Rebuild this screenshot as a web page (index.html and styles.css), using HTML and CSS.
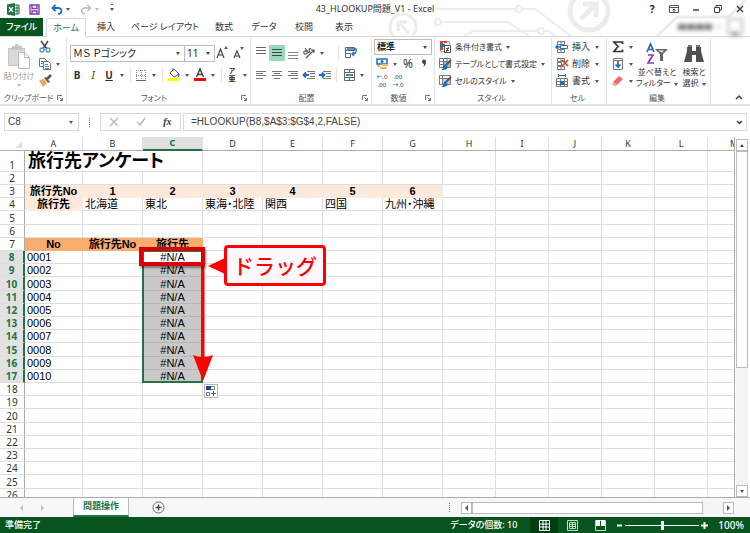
FILE: index.html
```html
<!DOCTYPE html>
<html lang="ja">
<head>
<meta charset="utf-8">
<title>43_HLOOKUP問題_V1 - Excel</title>
<link rel="stylesheet" href="styles.css">
</head>
<body>
<header class="top">
  <svg class="circuit" viewBox="0 0 370 36" width="370" height="36" aria-hidden="true">
    <g fill="none" stroke="#ececec" stroke-width="2">
      <circle cx="209" cy="11" r="19" stroke-width="5"/>
      <path d="M201 19 215 5M203 4h13v13" stroke-width="5"/>
      <circle cx="23" cy="27" r="13" stroke-width="3"/>
      <path d="M29 33 19 23M18 31v-9h9" stroke-width="3"/>
      <circle cx="58" cy="22" r="3"/><path d="M61 22h67l21 14"/>
      <circle cx="139" cy="9" r="3"/><path d="M56 9h80M142 9h13l36 27"/>
      <circle cx="161" cy="31" r="3"/><path d="M84 36l9-5h65M164 31h4l8 5"/>
      <path d="M277 36l20-19h52M349 17 365 0" stroke-width="3"/>
    </g>
  </svg>
  <div class="titlebar">
    <div class="quick">
      <svg width="13" height="13" viewBox="0 0 13 13"><path fill="#1e7145" d="M0 1.500 8 0v13L0 11.500z"/><path fill="none" stroke="#1e7145" d="M8 2h4v9H8M8 5h4M8 8h4M10 2v9"/><path d="M2 4l4 5M6 4 2 9" stroke="#fff" stroke-width="1.300"/></svg>
      <button aria-label="上書き保存"><svg width="11" height="11" viewBox="0 0 11 11"><path fill="none" stroke="#7b3fb0" stroke-width="1.400" d="M1 1h9v9H1zM3 1v3.500h5V1M3 10V7h5v3"/></svg></button>
      <button class="undo" aria-label="元に戻す"><svg width="12" height="11" viewBox="0 0 12 11"><path fill="none" stroke="#1f6fbf" stroke-width="1.800" d="M2 4h5c5 0 4 6 0 6M4.500 1 1.500 4l3 3"/></svg></button>
      <button class="dd" aria-label="元に戻すの一覧"></button>
      <button class="redo" aria-label="やり直し"><svg width="12" height="11" viewBox="0 0 12 11"><path fill="none" stroke="#b9b9b9" stroke-width="1.300" d="M10 4H5C0 4 1 10 5 10M7.500 1l3 3-3 3"/></svg></button>
      <button class="dd pale" aria-label="やり直しの一覧"></button>
      <button class="dd bar" aria-label="クイック アクセス"></button>
    </div>
    <h1>43_HLOOKUP問題_V1 - Excel</h1>
    <div class="window">
      <button aria-label="ヘルプ"><b>?</b></button>
      <button aria-label="リボンの表示オプション"><svg width="10" height="8" viewBox="0 0 10 8"><path fill="none" stroke="#555" d="M.5.5h9v7h-9zM.5 2.500h9M5 7V4M3.500 5.500 5 4l1.500 1.500"/></svg></button>
      <button aria-label="最小化"><svg width="8" height="8" viewBox="0 0 8 8"><path stroke="#444" stroke-width="1.500" d="M1 5h6"/></svg></button>
      <button aria-label="元に戻す (縮小)"><svg width="8" height="8" viewBox="0 0 8 8"><path fill="none" stroke="#444" d="M.5 2.500h5v5h-5zM2 2V.5h5.500V5H6"/></svg></button>
      <button aria-label="閉じる"><svg width="8" height="8" viewBox="0 0 8 8"><path stroke="#444" stroke-width="1.500" d="M1 1l6 6M7 1 1 7"/></svg></button>
    </div>
  </div>
  <nav class="tabs">
    <button class="file">ファイル</button>
    <button class="on">ホーム</button>
    <button>挿入</button>
    <button class="wide">ページ レイアウト</button>
    <button>数式</button>
    <button>データ</button>
    <button>校閲</button>
    <button>表示</button>
    <svg class="account" width="70" height="18" viewBox="0 0 70 18" aria-hidden="true"><path d="M3 9h34" stroke="#777" stroke-width="6" stroke-dasharray="8 1"/><path d="M42 9h3" stroke="#aaa" stroke-width="2"/><path fill="#fff" stroke="#bbb" stroke-width="2" d="M53 17V1h14v16"/><path fill="#999" d="M55 18c0-6 10-6 10 0z"/></svg>
  </nav>
</header>

<section class="ribbon">
  <div class="group clip">
    <div class="body cols">
      <button class="big off">
        <svg width="24" height="26" viewBox="0 0 24 26"><path fill="#dcd9d9" stroke="#c6c4c4" d="M1.500 5.500h16v17h-16z"/><path fill="#c6c4c4" d="M5 7V3h3c0-3 4-3 4 0h3v4z"/><path fill="#fff" stroke="#bbb9b9" d="M11.500 9.500h6l5 5v11h-11zM17.500 9.500v5h5"/></svg>
        <span>貼り付け</span><i class="tri"></i>
      </button>
      <div class="stack">
        <button class="ib" aria-label="切り取り"><svg class="i" viewBox="0 0 16 16"><path stroke="#444" stroke-width="1.500" d="M4 2l6 8M11 2 6 10"/><g fill="none" stroke="#4b8fcb" stroke-width="1.300"><circle cx="5" cy="11" r="2"/><circle cx="11" cy="11" r="2"/></g></svg></button>
        <div class="row"><button class="ib" aria-label="コピー"><svg class="i" viewBox="0 0 16 16"><g fill="#fff" stroke="#777"><path d="M2.500 2.500h5l2 2v6h-7z"/><path d="M6.500 5.500h5l2 2v6h-7z"/></g><path stroke="#3b87cc" d="M8 8.500h3M8 10.500h4M8 12.500h4M4 5.500h2M4 7.500h2"/></svg></button><button class="dd" aria-label="コピーの種類"></button></div>
        <button class="ib" aria-label="書式のコピー"><svg class="i" viewBox="0 0 16 16"><path fill="#e9a764" d="M2 7l5-1 3 4-4 4z"/><path fill="#666" d="M7 5l2-1 4 5-2 1z"/><path stroke="#555" stroke-width="2.500" d="M10 6l4-4"/></svg></button>
      </div>
    </div>
    <div class="label"><span>クリップボード</span><button class="launch" aria-label="クリップボードの詳細"><svg width="6" height="6" viewBox="0 0 6 6"><path fill="none" stroke="#777" d="M.5 5V.5H5M2.500 2.500l3 3M5.500 3v2.500H3"/></svg></button></div>
  </div>

  <div class="group font">
    <div class="body two">
      <div class="row">
        <label class="combo fam"><select aria-label="フォント"><option>ＭＳ Ｐゴシック</option></select></label><label class="combo size"><select aria-label="フォント サイズ"><option>11</option></select></label>
        <button class="ib grow" aria-label="フォント サイズの拡大"><svg class="i" viewBox="0 0 16 16"><path fill="none" stroke="#444" stroke-width="1.200" d="M2 13 5.500 4 9 13M3.500 10h4"/><path fill="#1f6fbf" d="M9 4l2-3 2 3z"/></svg></button>
        <button class="ib" aria-label="フォント サイズの縮小"><svg class="i" viewBox="0 0 16 16"><path fill="none" stroke="#444" stroke-width="1.200" d="M2 13 5 6l3 7M3 11h4"/><path fill="#1f6fbf" d="M8 2h4l-2 3z"/></svg></button>
      </div>
      <div class="row">
        <button class="ib"><b>B</b></button><button class="ib"><em>I</em></button><button class="ib"><u><b>U</b></u></button><button class="dd" aria-label="下線"></button><i class="sep"></i>
        <button class="ib" aria-label="罫線"><svg class="i" viewBox="0 0 16 16"><path fill="none" stroke="#888" stroke-dasharray="1 1" d="M3 3.500h10M3.500 3v10M12.500 3v10M3 8.500h10M8.500 3v10"/><path stroke="#666" d="M3 13.500h10"/></svg></button><button class="dd" aria-label="罫線の種類"></button><i class="sep"></i>
        <button class="ib" aria-label="塗りつぶし"><svg class="i" viewBox="0 0 16 16"><path fill="#fff" stroke="#666" d="M4 6l4-4 5 5-5 3z"/><path fill="none" stroke="#666" d="M7 4V1"/><path fill="#1f6fbf" d="M12 6c2 1 2 3 1 4-2-1-1-2-1-4z"/><path fill="#ff0" d="M2 11h12v3H2z"/></svg></button><button class="dd" aria-label="塗りつぶしの色"></button>
        <button class="ib" aria-label="フォントの色"><svg class="i" viewBox="0 0 16 16"><path fill="none" stroke="#444" stroke-width="1.500" d="M4.500 10 8 2l3.500 8M6 7.500h4"/><path fill="#e00" d="M2 11h12v3H2z"/></svg></button><button class="dd" aria-label="文字の色"></button><i class="sep"></i>
        <button class="ib ruby"><span>ア</span><span>亜</span></button><button class="dd" aria-label="ふりがな"></button>
      </div>
    </div>
    <div class="label"><span>フォント</span><button class="launch" aria-label="フォントの詳細"><svg width="6" height="6" viewBox="0 0 6 6"><path fill="none" stroke="#777" d="M.5 5V.5H5M2.500 2.500l3 3M5.500 3v2.500H3"/></svg></button></div>
  </div>

  <div class="group align">
    <div class="body two">
      <div class="row">
        <button class="ib" aria-label="上揃え"><svg class="i" viewBox="0 0 16 16"><path stroke="#666" d="M3 2.500h10M3 5.500h10M3 8.500h10"/></svg></button>
        <button class="ib sel" aria-label="上下中央揃え"><svg class="i" viewBox="0 0 16 16"><path stroke="#444" d="M3 4.500h10M3 7.500h10M3 10.500h10"/></svg></button>
        <button class="ib" aria-label="下揃え"><svg class="i" viewBox="0 0 16 16"><path stroke="#888" d="M3 7.500h10M3 10.500h10M3 13.500h10"/></svg></button>
        <button class="ib" aria-label="方向"><svg class="i" viewBox="0 0 16 16"><g fill="none" stroke="#555" stroke-width="1.200"><circle cx="4.500" cy="7.500" r="1.700"/><path d="M4 3l4 5M9 7.500c-2-3 0-5 1-3"/><path d="M5 13l8-8M13 8V5h-3"/></g></svg></button><button class="dd" aria-label="方向の一覧"></button><i class="sep far"></i>
        <button class="ib" aria-label="折り返して全体を表示する"><svg class="i" viewBox="0 0 16 16"><path fill="none" stroke="#666" d="M2.500 2.500h9v3h-9zM2.500 8.500h5v4h-5zM2.500 5v4"/><path fill="none" stroke="#1f6fbf" stroke-width="1.300" d="M4 4h9c1 4-1 5-4 5M11 7 9 9l2 2"/></svg></button>
      </div>
      <div class="row">
        <button class="ib" aria-label="左揃え"><svg class="i" viewBox="0 0 16 16"><path stroke="#777" d="M3 4.500h10M3 6.500h7M3 8.500h10M3 11.500h7"/></svg></button>
        <button class="ib" aria-label="中央揃え"><svg class="i" viewBox="0 0 16 16"><path stroke="#777" d="M3 4.500h10M5 6.500h6M3 8.500h10M5 11.500h6"/></svg></button>
        <button class="ib" aria-label="右揃え"><svg class="i" viewBox="0 0 16 16"><path stroke="#777" d="M3 4.500h10M6 6.500h7M3 8.500h10M6 11.500h7"/></svg></button>
        <button class="ib" aria-label="インデントを減らす"><svg class="i" viewBox="0 0 16 16"><path stroke="#777" d="M6 4.500h8M9 6.500h5M9 9.500h5M6 11.500h8"/><path fill="none" stroke="#1f6fbf" stroke-width="1.800" d="M8 8H3M5 5.500 2.500 8 5 10.500"/></svg></button>
        <button class="ib" aria-label="インデントを増やす"><svg class="i" viewBox="0 0 16 16"><path stroke="#777" d="M6 4.500h8M9 6.500h5M9 9.500h5M6 11.500h8"/><path fill="none" stroke="#1f6fbf" stroke-width="1.800" d="M2 8h5M5 5.500 7.500 8 5 10.500"/></svg></button>
        <i class="sep near"></i>
        <button class="ib" aria-label="セルを結合して中央揃え"><svg class="i" viewBox="0 0 16 16"><path fill="none" stroke="#666" d="M3.500 2.500h10v11h-10zM3 5.500h10M3 10.500h10M8.500 3v2M8.500 11v2"/><path stroke="#1f6fbf" stroke-width="1.300" d="M5 8h7M6 7v2M11 7v2"/></svg></button><button class="dd" aria-label="結合の種類"></button>
      </div>
    </div>
    <div class="label"><span>配置</span><button class="launch" aria-label="配置の詳細"><svg width="6" height="6" viewBox="0 0 6 6"><path fill="none" stroke="#777" d="M.5 5V.5H5M2.500 2.500l3 3M5.500 3v2.500H3"/></svg></button></div>
  </div>

  <div class="group number">
    <div class="body three">
      <label class="combo"><select aria-label="表示形式"><option>標準</option></select></label>
      <div class="row"><button class="ib" aria-label="通貨表示形式"><svg class="i" viewBox="0 0 16 16"><path fill="#fff" stroke="#1f6fbf" stroke-width="1.500" d="M3 3h10v5H3z"/><circle cx="8" cy="5.500" r="1.500" fill="#1f6fbf"/><path fill="#f0b566" d="M8 8h6v2H8zM6 11h7v2H6zM3 9h3v2H3z"/></svg></button><button class="dd" aria-label="通貨の種類"></button><button class="ib pct">%</button><button class="ib comma" aria-label="桁区切りスタイル"><svg class="i" viewBox="0 0 16 16"><path fill="#444" d="M6 5a2 2 0 1 1 4 1c0 2-1 4-3 5 1-1 1-2 1-3-1 0-2-1-2-3z"/></svg></button></div>
      <div class="row"><button class="ib dec"><span><b>←</b>.0</span><span>.00</span></button><button class="ib dec"><span>.00</span><span><b>→</b>.0</span></button></div>
    </div>
    <div class="label"><span>数値</span><button class="launch" aria-label="数値の詳細"><svg width="6" height="6" viewBox="0 0 6 6"><path fill="none" stroke="#777" d="M.5 5V.5H5M2.500 2.500l3 3M5.500 3v2.500H3"/></svg></button></div>
  </div>

  <div class="group style">
    <div class="body three">
      <button class="cmd"><svg class="i" viewBox="0 0 16 16"><path fill="#fff" stroke="#999" d="M3.500 2.500h9v10h-9z"/><path fill="#e23c28" d="M3 2h3v3H3zM3 8h3v3H3zM7 2h3v2H7z"/><path fill="#1f6fbf" d="M3 5h5v3H3z"/><path fill="#fff" stroke="#555" d="M7.500 6.500h6v7h-6zM9 9.500h3M9 11.500h3M11.500 8 9.500 13"/></svg><span>条件付き書式</span><i class="tri"></i></button>
      <button class="cmd"><svg class="i" viewBox="0 0 16 16"><path fill="#fff" stroke="#777" d="M2.500 2.500h11v9h-11zM2 5.500h11M2 8.500h11M6.500 3v8M10 3v8"/><path fill="#8bb9e3" d="M7 6h6v5H7z"/><path stroke="#555" stroke-width="2" d="M14 4 9 9"/><path fill="#1f6fbf" d="M8 8l3 3c-1 3-4 3-7 3 3-1 2-5 4-6z"/></svg><span>テーブルとして書式設定</span><i class="tri"></i></button>
      <button class="cmd"><svg class="i" viewBox="0 0 16 16"><path fill="#fff" stroke="#777" d="M2.500 2.500h11v9h-11zM2 5.500h11M5.500 3v8"/><path fill="#b8d3ec" d="M6 6h7v5H6z"/><path stroke="#555" stroke-width="2" d="M14 4 9 9"/><path fill="#1f6fbf" d="M8 8l3 3c-1 3-4 3-7 3 3-1 2-5 4-6z"/></svg><span>セルのスタイル</span><i class="tri"></i></button>
    </div>
    <div class="label"><span>スタイル</span></div>
  </div>

  <div class="group cell">
    <div class="body three">
      <button class="cmd"><svg class="i" viewBox="0 0 16 16"><path fill="#fff" stroke="#777" d="M3.500 2.500h7v3h-7zM3.500 10.500h7v3h-7zM7 3v2M7 11v2"/><path fill="#fff" stroke="#1f6fbf" d="M6.500 6.500h7v3h-7z"/><path fill="none" stroke="#1f6fbf" stroke-width="1.500" d="M7 8H2M4 6 2 8l2 2"/></svg><span>挿入</span><i class="tri"></i></button>
      <button class="cmd"><svg class="i" viewBox="0 0 16 16"><path fill="#fff" stroke="#777" d="M3.500 2.500h7v3h-7zM3.500 10.500h7v3h-7zM7 3v2M7 11v2M3.500 6.500h4v3h-4z"/><path stroke="#e03a1c" stroke-width="1.700" d="M8 4l6 6M14 4l-6 6"/></svg><span>削除</span><i class="tri"></i></button>
      <button class="cmd"><svg class="i" viewBox="0 0 16 16"><path fill="#fff" stroke="#777" d="M2.500 5.500h11v8h-11zM2 8.500h11M2 11.500h11M6.500 5v8M10.500 5v8"/><path fill="#1f6fbf" d="M6 8h4v4H6z"/><path stroke="#1f6fbf" d="M4 2.500h8M4.500 1v3M11.500 1v3"/></svg><span>書式</span><i class="tri"></i></button>
    </div>
    <div class="label"><span>セル</span></div>
  </div>

  <div class="group edit">
    <div class="body cols">
      <div class="stack">
        <div class="row"><button class="ib" aria-label="合計"><svg class="i" viewBox="0 0 16 16"><path fill="none" stroke="#333" stroke-width="1.700" d="M12.500 5V3H4l4 4.500L4 12.500h8.500v-2"/></svg></button><button class="dd" aria-label="合計の種類"></button></div>
        <div class="row"><button class="ib" aria-label="フィル"><svg class="i" viewBox="0 0 16 16"><path fill="#fff" stroke="#777" d="M3.500 2.500h9v11h-9zM3 4.500h9"/><path fill="none" stroke="#1f6fbf" stroke-width="1.700" d="M8 5v6M5.500 8.500 8 11l2.500-2.500"/></svg></button><button class="dd" aria-label="フィルの種類"></button></div>
        <div class="row"><button class="ib" aria-label="クリア"><svg class="i" viewBox="0 0 16 16"><path fill="#ee6a70" d="M3 9 9 3l4 3-6 6z"/><path fill="#f5a5a8" d="M3 9l4 3-1 1H4l-2-2z"/></svg></button><button class="dd" aria-label="クリアの種類"></button></div>
      </div>
      <button class="big sort"><svg width="24" height="24" viewBox="0 0 24 24"><path fill="none" stroke="#2467ae" stroke-width="1.700" d="M2 10 5.500 2 9 10M3.500 7.500h4"/><path fill="none" stroke="#8a3fb8" stroke-width="1.700" d="M3 13h5l-5 8h6"/><path fill="#666" d="M10 7h13l-5 5v7h-3v-7z"/><path fill="#fff" d="M13 8.500h6l-2 2z"/></svg><span>並べ替えと<br>フィルター<i class="tri"></i></span></button>
      <button class="big"><svg width="24" height="24" viewBox="0 0 24 24"><path fill="#505050" d="M5 5h5v4h4V5h5v4l3 11h-8v-7h-4v7H2L5 9z"/><path fill="#777" d="M6 3h4v2H6zM14 3h4v2h-4z"/></svg><span>検索と<br>選択<i class="tri"></i></span></button>
    </div>
    <div class="label"><span>編集</span></div>
  </div>
  <button class="collapse" aria-label="リボンを折りたたむ"><svg width="8" height="6" viewBox="0 0 8 6"><path fill="none" stroke="#444" stroke-width="1.500" d="M1 5l3-3 3 3"/></svg></button>
</section>

<section class="formula">
  <div class="box name"><input aria-label="名前ボックス" value="C8"><i class="tri"></i></div>
  <span class="dots"></span>
  <div class="box fx">
    <button aria-label="キャンセル"><svg width="10" height="10" viewBox="0 0 10 10"><path stroke="#bbb" stroke-width="1.300" d="M1 1l8 8M9 1 1 9"/></svg></button>
    <button aria-label="入力"><svg width="10" height="10" viewBox="0 0 10 10"><path fill="none" stroke="#bbb" stroke-width="1.600" d="M1 5l3 3 5-7"/></svg></button>
    <button class="fn">fx</button>
  </div>
  <div class="box line"><input aria-label="数式バー" value="=HLOOKUP(B8,$A$3:$G$4,2,FALSE)"><svg width="7" height="5" viewBox="0 0 7 5"><path fill="none" stroke="#444" stroke-width="1.500" d="M1 1l2.500 2.500L6 1"/></svg></div>
</section>

<main class="sheet">
  <div class="view">
    <table>
      <colgroup><col class="c0"><col class="ca"><col class="cw"><col class="cw"><col class="cw"><col class="cw"><col class="cw"><col class="cw"><col class="cn"><col class="cn"><col class="cn"><col class="cn"><col class="cn"><col class="cn"></colgroup>
      <thead><tr><th class="corner"></th><th>A</th><th>B</th><th class="act">C</th><th>D</th><th>E</th><th>F</th><th>G</th><th>H</th><th>I</th><th>J</th><th>K</th><th>L</th><th>M</th></tr></thead>
      <tbody>
        <tr class="tall"><th>1</th><td class="title" colspan="3">旅行先アンケート</td><td></td><td></td><td></td><td></td><td></td><td></td><td></td><td></td><td></td><td></td></tr>
        <tr><th>2</th><td></td><td></td><td></td><td></td><td></td><td></td><td></td><td></td><td></td><td></td><td></td><td></td><td></td></tr>
        <tr class="peach"><th>3</th><td>旅行先No</td><td>1</td><td>2</td><td>3</td><td>4</td><td>5</td><td>6</td><td></td><td></td><td></td><td></td><td></td><td></td></tr>
        <tr><th>4</th><td class="key">旅行先</td><td>北海道</td><td>東北</td><td>東海・北陸</td><td>関西</td><td>四国</td><td>九州・沖縄</td><td></td><td></td><td></td><td></td><td></td><td></td></tr>
        <tr><th>5</th><td></td><td></td><td></td><td></td><td></td><td></td><td></td><td></td><td></td><td></td><td></td><td></td><td></td></tr>
        <tr><th>6</th><td></td><td></td><td></td><td></td><td></td><td></td><td></td><td></td><td></td><td></td><td></td><td></td><td></td></tr>
        <tr class="orange"><th>7</th><td>No</td><td>旅行先No</td><td>旅行先</td><td></td><td></td><td></td><td></td><td></td><td></td><td></td><td></td><td></td><td></td></tr>
        <tr class="pick first"><th>8</th><td>0001</td><td></td><td class="na">#N/A
          <div class="range"></div>
          <svg class="drag" width="20" height="118" viewBox="0 0 20 118"><path stroke="red" stroke-width="3" d="M10 0v100"/><path fill="red" d="M0 91q10 4 20 0L10 117z"/></svg>
          <div class="focus"></div>
          <div class="callout">ドラッグ</div>
          <svg class="fill" width="14" height="14" viewBox="0 0 14 14"><path fill="#fff" stroke="#b5b5b5" d="M.5.5h13v13H.5z"/><path fill="#fff" stroke="#777" d="M2.500 2.500h8v3h-8zM2.500 8.500h3v3h-3z"/><path fill="#1c3f94" d="M2 2h5v4H2z"/><path stroke="#555" d="M7 9.500h5M9.500 7v5"/></svg>
        </td><td></td><td></td><td></td><td></td><td></td><td></td><td></td><td></td><td></td><td></td></tr>
        <tr class="pick"><th>9</th><td>0002</td><td></td><td class="na">#N/A</td><td></td><td></td><td></td><td></td><td></td><td></td><td></td><td></td><td></td><td></td></tr>
        <tr class="pick"><th>10</th><td>0003</td><td></td><td class="na">#N/A</td><td></td><td></td><td></td><td></td><td></td><td></td><td></td><td></td><td></td><td></td></tr>
        <tr class="pick"><th>11</th><td>0004</td><td></td><td class="na">#N/A</td><td></td><td></td><td></td><td></td><td></td><td></td><td></td><td></td><td></td><td></td></tr>
        <tr class="pick"><th>12</th><td>0005</td><td></td><td class="na">#N/A</td><td></td><td></td><td></td><td></td><td></td><td></td><td></td><td></td><td></td><td></td></tr>
        <tr class="pick"><th>13</th><td>0006</td><td></td><td class="na">#N/A</td><td></td><td></td><td></td><td></td><td></td><td></td><td></td><td></td><td></td><td></td></tr>
        <tr class="pick"><th>14</th><td>0007</td><td></td><td class="na">#N/A</td><td></td><td></td><td></td><td></td><td></td><td></td><td></td><td></td><td></td><td></td></tr>
        <tr class="pick"><th>15</th><td>0008</td><td></td><td class="na">#N/A</td><td></td><td></td><td></td><td></td><td></td><td></td><td></td><td></td><td></td><td></td></tr>
        <tr class="pick"><th>16</th><td>0009</td><td></td><td class="na">#N/A</td><td></td><td></td><td></td><td></td><td></td><td></td><td></td><td></td><td></td><td></td></tr>
        <tr class="pick"><th>17</th><td>0010</td><td></td><td class="na">#N/A</td><td></td><td></td><td></td><td></td><td></td><td></td><td></td><td></td><td></td><td></td></tr>
        <tr><th>18</th><td></td><td></td><td></td><td></td><td></td><td></td><td></td><td></td><td></td><td></td><td></td><td></td><td></td></tr>
        <tr><th>19</th><td></td><td></td><td></td><td></td><td></td><td></td><td></td><td></td><td></td><td></td><td></td><td></td><td></td></tr>
        <tr><th>20</th><td></td><td></td><td></td><td></td><td></td><td></td><td></td><td></td><td></td><td></td><td></td><td></td><td></td></tr>
        <tr><th>21</th><td></td><td></td><td></td><td></td><td></td><td></td><td></td><td></td><td></td><td></td><td></td><td></td><td></td></tr>
        <tr><th>22</th><td></td><td></td><td></td><td></td><td></td><td></td><td></td><td></td><td></td><td></td><td></td><td></td><td></td></tr>
        <tr><th>23</th><td></td><td></td><td></td><td></td><td></td><td></td><td></td><td></td><td></td><td></td><td></td><td></td><td></td></tr>
        <tr><th>24</th><td></td><td></td><td></td><td></td><td></td><td></td><td></td><td></td><td></td><td></td><td></td><td></td><td></td></tr>
        <tr><th>25</th><td></td><td></td><td></td><td></td><td></td><td></td><td></td><td></td><td></td><td></td><td></td><td></td><td></td></tr>
        <tr><th>26</th><td></td><td></td><td></td><td></td><td></td><td></td><td></td><td></td><td></td><td></td><td></td><td></td><td></td></tr>
      </tbody>
    </table>
  </div>
  <div class="vscroll">
    <button class="arrow" aria-label="上へ"><i class="tri up"></i></button>
    <div class="track"><div class="thumb"></div></div>
    <button class="arrow" aria-label="下へ"><i class="tri"></i></button>
  </div>
</main>

<footer>
  <div class="sheets">
    <button class="nav" aria-label="前のシート"><i class="tri left"></i></button>
    <button class="nav" aria-label="次のシート"><i class="tri right"></i></button>
    <button class="tab">問題操作</button>
    <button class="add" aria-label="新しいシート"><svg width="13" height="13" viewBox="0 0 13 13"><circle cx="6.500" cy="6.500" r="5.500" fill="#fff" stroke="#666"/><path stroke="#444" stroke-width="1.500" d="M6.500 3.500v6M3.500 6.500h6"/></svg></button>
    <span class="dots"></span>
    <div class="hscroll">
      <button class="arrow" aria-label="左へ"><i class="tri left"></i></button>
      <div class="track"><div class="thumb"></div></div>
      <button class="arrow" aria-label="右へ"><i class="tri right"></i></button>
    </div>
  </div>
  <div class="status">
    <span>準備完了</span>
    <span class="count">データの個数: 10</span>
    <button class="mode on" aria-label="標準"><svg width="11" height="11" viewBox="0 0 11 11"><path fill="none" stroke="#fff" d="M.5.5h10v10H.5zM0 4h11M0 7h11M4 0v11M7 0v11"/></svg></button>
    <button class="mode" aria-label="ページ レイアウト"><svg width="11" height="11" viewBox="0 0 11 11"><path fill="none" stroke="#c3dbca" d="M.5.5h10v10H.5zM2.500 2.500h6v6h-6zM3 4.500h5M3 6.500h5M5.500 3v5"/></svg></button>
    <button class="mode" aria-label="改ページ プレビュー"><svg width="11" height="11" viewBox="0 0 11 11"><path fill="none" stroke="#c3dbca" d="M.5.5h10v10H.5z"/><path fill="#fff" d="M1 0h4v6H1zM6 0h4v6H6z"/></svg></button>
    <button class="zoom" aria-label="縮小"><svg width="7" height="7" viewBox="0 0 7 7"><path stroke="#fff" stroke-width="2" d="M1 3.500h5"/></svg></button>
    <input type="range" aria-label="ズーム" min="0" max="100" value="50">
    <button class="zoom" aria-label="拡大"><svg width="7" height="7" viewBox="0 0 7 7"><path stroke="#fff" stroke-width="2" d="M0 3.500h7M3.500 0v7"/></svg></button>
    <span class="pct">100%</span>
  </div>
</footer>
</body>
</html>
```
FILE: styles.css
```css
* { box-sizing: border-box; }
html, body { margin: 0; height: 100%; }
body {
  display: flex; flex-direction: column; height: 100vh; overflow: hidden;
  background: #fff; color: #333;
  font: 9px/12px "Noto Sans", "Noto Sans CJK JP", sans-serif;
  font-feature-settings: "palt";
}
button, input, select { font: inherit; font-feature-settings: inherit; color: inherit; margin: 0; padding: 0; border: 0; background: none; }
button { display: flex; align-items: center; justify-content: center; white-space: nowrap; }
svg { display: block; flex: none; }
.i { width: 16px; height: 16px; }

/* small drop-down triangles */
.tri, .dd::before { content: ""; display: inline-block; flex: none; width: 0; height: 0; border: 2px solid transparent; border-top: 3px solid #555; border-bottom: 0; }
.tri.up { border-top: 0; border-bottom: 3px solid #444; }
.tri.left { border: 3px solid transparent; border-left: 0; border-right-color: #555; }
.tri.right { border: 3px solid transparent; border-right: 0; border-left-color: #555; }
.dd { width: 10px; height: 16px; flex: none; }
.dd.pale::before { border-top-color: #bbb; }
.dd.bar::before { box-shadow: 0 -5px 0 -1px #666; }

/* title bar and tabs */
.top { position: relative; }
.circuit { position: absolute; right: 0; top: 0; }
.titlebar { position: relative; display: grid; grid-template-columns: 1fr auto 1fr; align-items: center; height: 18px; }
.titlebar h1 { margin: 0; font-size: 9px; font-weight: 400; }
.quick { display: flex; align-items: center; padding-left: 7px; }
.quick button:nth-child(2) { margin-left: 9px; }
.quick .undo { margin-left: 11px; }
.quick .redo { margin-left: 7px; }
.quick .bar { margin-left: 5px; }
.window { display: flex; justify-content: flex-end; gap: 6px; padding-right: 2px; }
.window button { width: 16px; height: 16px; font-size: 11px; }
.tabs { position: relative; display: flex; height: 19px; border-bottom: 1px solid #d9d9d9; }
.tabs button { width: 40px; height: 18px; }
.tabs .file { width: 43px; margin-right: 3px; background: #07541f; color: #fff; font-weight: 500; }
.tabs .on { height: 19px; border: 1px solid #d9d9d9; border-bottom: 0; background: #fff; color: #217346; }
.tabs .wide { width: 78px; }
.account { margin-left: auto; margin-right: 5px; filter: blur(2px); }

/* ribbon */
.ribbon { display: flex; height: 69px; padding-top: 1px; border-bottom: 2px solid #e4e4e4; }
.group { display: flex; flex-direction: column; border-right: 1px solid #e4e4e4; }
.body { height: 53px; display: flex; flex-direction: column; }
.label { display: flex; align-items: center; height: 13px; padding-right: 3px; color: #555; font-size: 8px; }
.label span { flex: 1; text-align: center; }
.launch { width: 6px; }
.row { display: flex; align-items: center; height: 16px; }
.two { padding: 7px 0 0 2px; gap: 6px; }
.three { padding: 1px 0 0 2px; gap: 1px; }
.cols { flex-direction: row; padding-top: 1px; }
.stack { display: flex; flex-direction: column; gap: 1px; }
.ib { width: 16px; height: 16px; flex: none; font-size: 10px; }
.sel { background: #9bdab8; }
.sep { width: 1px; height: 14px; margin: 0 3px; background: #e2e2e2; }
.sep.far { margin: 0 4px 0 11px; }
.sep.near { margin: 0 4px 0 3px; }
.clip { width: 67px; }
.clip .stack { margin-left: -1px; }
.big { flex-direction: column; justify-content: flex-start; width: 38px; padding-top: 3px; font-size: 8px; line-height: 11px; }
.big .tri { margin-left: 3px; }
.clip .big .tri { margin: 2px 0 0; border-top-color: #bbb; }
.clip .big { padding-top: 4px; }
.off { color: #999; line-height: 13px; }
.font { width: 184px; }
.align { width: 121px; }
.number { width: 63px; }
.style { width: 117px; }
.cell { width: 55px; }
.edit { width: 104px; }
.combo { position: relative; display: flex; height: 17px; border: 1px solid #bcbcbc; }
.combo::after { content: ""; position: absolute; right: 4px; top: 6px; border: 2px solid transparent; border-top: 3px solid #444; border-bottom: 0; pointer-events: none; }
.combo select { width: 100%; padding-left: 2px; appearance: none; font-size: 10px; line-height: 14px; color: #222; }
.fam { width: 115px; margin-left: 1px; }
.size { width: 31px; margin-left: -1px; }
.grow { margin-right: 1px; }
.ruby { flex-direction: column; font-size: 7px; line-height: 8px; font-weight: 700; }
.number .combo { width: 58px; height: 16px; }
.number select { font-size: 9px; font-weight: 700; }
.pct.ib { font-size: 12px; }
.dec { flex-direction: column; font-size: 6px; line-height: 8px; }
.dec b { color: #1f6fbf; }
.cmd { justify-content: flex-start; height: 16px; gap: 2px; }
.cmd .tri { margin-left: 2px; }
.style .cmd { font-size: 8px; }
.cell .tri { margin-left: 3px; }
.edit .stack { width: 29px; padding-left: 3px; }
.edit .sort { width: 42px; }
.edit .big:last-child { width: 32px; }
.collapse { align-self: flex-end; margin-left: auto; padding: 3px 7px 4px; }

/* formula bar */
.formula { display: flex; align-items: center; height: 31px; padding: 1px 3px 0 4px; }
.box { display: flex; align-items: center; height: 18px; border: 1px solid #d8d8d8; }
.box input { flex: 1; min-width: 0; font: 10px/14px "Liberation Sans", sans-serif; color: #444; }
.name { width: 75px; padding: 0 5px 0 3px; }
.dots { width: 1px; height: 9px; border-left: 1px dotted #777; }
.formula .dots { margin: 0 10px; }
.fx { width: 81px; justify-content: space-around; }
.fn { font: italic bold 10px/12px "Liberation Serif", serif; }
.line { flex: 1; margin-left: 2px; padding: 0 3px 0 7px; }

/* worksheet */
.sheet { flex: 1; min-height: 0; display: flex; }
.view { flex: 1; min-width: 0; overflow: hidden; border-right: 1px solid #ababab; }
table { table-layout: fixed; width: 760px; border-collapse: separate; border-spacing: 0; }
.c0 { width: 25px; }
.ca { width: 58px; }
.cw { width: 60px; }
.cn { width: 53px; }
th, td { height: 13px; padding: 0; border-right: 1px solid #dedede; border-bottom: 1px solid #dedede; white-space: nowrap; line-height: 12px; }
tbody tr:nth-child(5n) > * { height: 14px; }
.tall > * { height: 21px; }
thead th { height: 14px; font-weight: 400; font-size: 9px; border-bottom-color: #ababab; }
thead .corner { border-right: 0; background: linear-gradient(135deg, transparent 50%, #ddd 50%) right 3px bottom 2px / 7px 7px no-repeat; }
thead .act { background: #e0e0e0; color: #217346; font-weight: 700; border-bottom: 2px solid #217346; }
tbody th { font-weight: 400; font-size: 10px; border-right-color: #ababab; vertical-align: bottom; }
td { padding-left: 2px; font-family: "Liberation Sans", "Noto Sans CJK JP", sans-serif; font-size: 11px; color: #000; }
.title { font-size: 18px; font-weight: 700; line-height: 20px; padding-left: 3px; }
.peach td:nth-child(-n+8), .key, .orange td:nth-child(-n+4) { background: #fdeadc; border-color: #fdeadc; font-weight: 700; text-align: center; padding: 0; }
.orange td:nth-child(-n+4) { background: #f8ad6e; border-color: #f8ad6e; }
.pick th { background: #e2e2e2; color: #217346; font-weight: 700; border-right: 2px solid #217346; }
.na { padding: 0; text-align: center; background: #c9c9c9; border-color: #b5b5b5; }
.first .na { position: relative; background: #fff; }

/* selection frame and drag annotation over the cells */
.range { position: absolute; left: -1px; top: -1px; width: 61px; height: 133px; border: 2px solid #217346; }
.focus { position: absolute; left: -4px; top: -4px; width: 66px; height: 19px; border: 4px solid #dc0000; box-shadow: 1px 2px 2px rgba(0, 0, 0, .4); }
.drag { position: absolute; left: 50px; top: 13px; }
.callout { position: absolute; left: 81px; top: -6px; width: 102px; height: 41px; border: 3px solid red; border-radius: 4px; background: #fbf8ff; color: red; font: 500 21px/34px "Noto Sans CJK JP", sans-serif; text-align: center; }
.callout::before { content: ""; position: absolute; left: -19px; top: 10px; border: 8px solid transparent; border-left: 0; border-right: 17px solid red; }
.fill { position: absolute; left: 61px; top: 133px; }

/* scroll bars */
.arrow { width: 11px; height: 12px; flex: none; border: 1px solid #bbb; background: #fff; }
.track { flex: 1; background: #f3f3f3; }
.thumb { border: 1px solid #bbb; background: #fff; }
.vscroll { display: flex; flex-direction: column; width: 15px; padding: 2px 2px 0 1px; }
.vscroll .arrow { width: 12px; }
.vscroll .thumb { height: 65%; }

/* sheet tabs */
.sheets { display: flex; align-items: center; height: 20px; padding-right: 16px; border-top: 1px solid #ababab; background: #f7f7f7; }
.nav { width: 21px; }
.nav:first-child { margin-left: 11px; }
.nav .left { border-right-color: #bbb; }
.nav .right { border-left-color: #bbb; }
.sheets .tab { width: 56px; height: 19px; margin: -1px 23px 0 20px; border: 1px solid #bbb; border-width: 0 1px 2px; border-bottom-color: #217346; background: #fff; color: #217346; font-weight: 700; }
.sheets .dots { margin: 0 11px 0 auto; }
.hscroll { display: flex; width: 273px; }
.hscroll .thumb { width: 92%; height: 12px; }

/* status bar */
.status { display: flex; align-items: center; height: 16px; padding: 0 6px 0 5px; background: #07541f; color: #fff; font-weight: 500; }
.count { margin: 0 13px 0 auto; }
.mode { width: 28px; height: 16px; }
.mode.on { background: #003d12; }
.zoom { width: 11px; height: 16px; }
input[type=range] { width: 74px; height: 12px; appearance: none; background: linear-gradient(#fff, #fff) center / 100% 1px no-repeat; }
input[type=range]::-webkit-slider-thumb { appearance: none; width: 3px; height: 9px; background: #fff; }
.status .pct { margin-left: 8px; font-size: 10px; }
```
